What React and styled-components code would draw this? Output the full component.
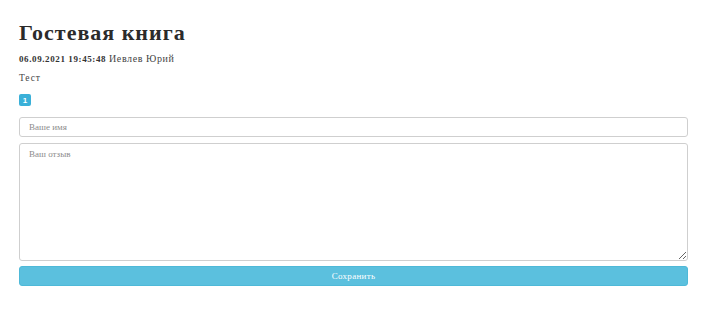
import React from 'react';
import styled, { createGlobalStyle } from 'styled-components';

const GlobalStyle = createGlobalStyle`
  html, body {
    margin: 0;
    padding: 0;
    background: #ffffff;
  }
  body {
    font-family: "Liberation Serif", "DejaVu Serif", serif;
    color: #333333;
  }
`;

const Page = styled.div`
  width: 669px;
  padding: 18px 0 0 19px;
  display: flex;
  flex-direction: column;
`;

const Title = styled.h1`
  margin: 0 0 4px;
  font-size: 22px;
  font-weight: 700;
  letter-spacing: 1px;
  line-height: 30px;
  color: #2b2b2b;
`;

const Meta = styled.div`
  font-size: 9px;
  letter-spacing: 0.6px;
  line-height: 14px;
  color: #333333;
`;

const Date = styled.b`
  font-weight: 700;
`;

const Author = styled.span`
  font-size: 10px;
  letter-spacing: 0.6px;
  color: #444444;
`;

const Message = styled.p`
  margin: 5px 0 0;
  font-size: 9.5px;
  letter-spacing: 0.9px;
  line-height: 14px;
  color: #444444;
`;

const Pager = styled.div`
  margin-top: 9px;
  display: flex;
  gap: 4px;
`;

const PageBadge = styled.span`
  display: inline-flex;
  align-items: center;
  justify-content: center;
  width: 12px;
  height: 12px;
  border-radius: 2px;
  background: ${(p) => (p.active ? '#3ab0d8' : '#e6e6e6')};
  color: #ffffff;
  font-family: "Liberation Sans", sans-serif;
  font-size: 8px;
  font-weight: 700;
`;

const Form = styled.form`
  margin-top: 11px;
  display: flex;
  flex-direction: column;
  gap: 6px;
`;

const Field = styled.input`
  box-sizing: border-box;
  width: 100%;
  height: 20px;
  padding: 0 9px;
  border: 1px solid #cfcfcf;
  border-radius: 3px;
  font-family: "Liberation Serif", serif;
  font-size: 9px;
  color: #555;
  outline: none;
  &::placeholder {
    color: #8c8c8c;
  }
`;

const Area = styled.textarea`
  box-sizing: border-box;
  width: 100%;
  height: 118px;
  padding: 5px 9px;
  border: 1px solid #cfcfcf;
  border-radius: 3px;
  font-family: "Liberation Serif", serif;
  font-size: 9px;
  color: #555;
  outline: none;
  resize: vertical;
  &::placeholder {
    color: #8c8c8c;
  }
`;

const Submit = styled.button`
  margin-top: -1px;
  height: 20px;
  width: 100%;
  border: 1px solid #4eb9d8;
  border-radius: 3px;
  background: #5bc0de;
  color: #ffffff;
  font-family: "Liberation Serif", serif;
  font-size: 9px;
  letter-spacing: 0.3px;
  cursor: pointer;
`;

export default function App() {
  return (
    <>
      <GlobalStyle />
      <Page>
        <Title>Гостевая книга</Title>
        <Meta>
          <Date>06.09.2021 19:45:48</Date> <Author>Иевлев Юрий</Author>
        </Meta>
        <Message>Тест</Message>
        <Pager>
          <PageBadge active>1</PageBadge>
        </Pager>
        <Form onSubmit={(e) => e.preventDefault()}>
          <Field placeholder="Ваше имя" />
          <Area placeholder="Ваш отзыв" />
          <Submit type="submit">Сохранить</Submit>
        </Form>
      </Page>
    </>
  );
}
